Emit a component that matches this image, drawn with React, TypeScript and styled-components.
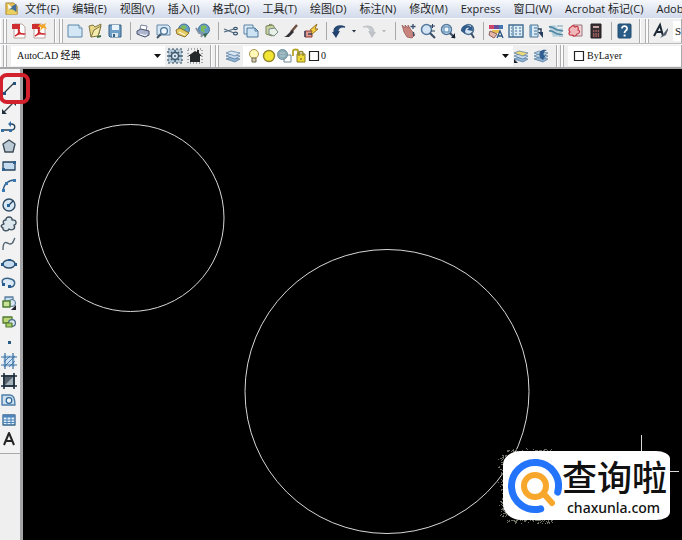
import React from "react";
import styled, { createGlobalStyle, css } from "styled-components";

const GlobalStyle = createGlobalStyle`
  * { box-sizing: border-box; }
  html, body { margin: 0; padding: 0; background: #000; }
  body { font-family: "Open Sans", "Noto Sans CJK SC", sans-serif; overflow: hidden; }
  button, select, input { font: inherit; color: inherit; margin: 0; padding: 0; border: 0; background: none; border-radius: 0; }
`;

const Page = styled.div`
  display: flex;
  flex-direction: column;
  min-height: 100vh;
  overflow: hidden;
`;

const MenuBar = styled.nav`
  display: flex;
  align-items: center;
  gap: 13px;
  height: 18px;
  padding-left: 5px;
  overflow: hidden;
  background: linear-gradient(#f6f8fc, #dfe5f1 60%, #d3dbec);
  color: #1c1d22;
  font-size: 11px;
  line-height: 16px;
`;

const AppMark = styled.svg`
  flex: none;
  width: 14px;
  height: 14px;
  margin-right: -7px;
`;

const MenuButton = styled.button`
  flex: none;
  white-space: nowrap;
  line-height: 16px;
`;

const ToolbarRow = styled.div<{ $last?: boolean }>`
  display: flex;
  align-items: stretch;
  height: ${(p) => (p.$last ? 25 : 26)}px;
  overflow: hidden;
  background: #efefef;
  border-top: 1px solid #fafafa;
  border-bottom: ${(p) => (p.$last ? "2px solid #a6a6a8" : "1px solid #b9b9bb")};
`;

const Toolbar = styled.div<{ $grow?: boolean }>`
  display: flex;
  flex: ${(p) => (p.$grow ? "1 1 0" : "none")};
  min-width: 0;
  align-items: center;
  padding: 0 7px 0 5px;
  border-left: 1px solid #fff;
  border-right: 1px solid #a9a9ab;
`;

const Grip = styled.span`
  flex: none;
  align-self: stretch;
  width: 4px;
  margin-right: 4px;
  border: solid #b0b0b2;
  border-width: 0 1px;
  background: #fbfbfb;
`;

const Group = styled.div<{ $gap?: number }>`
  display: flex;
  flex: none;
  align-items: center;
  gap: ${(p) => p.$gap ?? 4}px;
`;

const Divider = styled.span`
  flex: none;
  width: 12px;
  height: 18px;
  background: linear-gradient(#a9a9ab, #a9a9ab) 7px 0 / 1px 100% no-repeat;
`;

const IconButton = styled.button<{ $small?: boolean }>`
  display: flex;
  flex: none;
  align-items: center;
  justify-content: center;
  width: ${(p) => (p.$small ? 8 : 16)}px;
  height: 20px;
`;

const Glyph = styled.svg`
  display: block;
  flex: none;
  width: 16px;
  height: 16px;
  overflow: visible;
`;

const boxText = css`
  font-family: "Liberation Serif", "Noto Sans CJK SC", serif;
  font-size: 11px;
  line-height: 14px;
  color: #111;
`;

const Combo = styled.div<{ $width?: number }>`
  ${boxText}
  display: flex;
  flex: ${(p) => (p.$width ? "none" : "1 1 0")};
  width: ${(p) => (p.$width ? p.$width + "px" : "auto")};
  min-width: 0;
  align-items: center;
  height: 20px;
  padding-left: 3px;
  background: #fff;
`;

const ComboSelect = styled.select<{ $inset?: number }>`
  flex: 1 1 0;
  min-width: 0;
  height: 18px;
  padding: 0 14px 0 ${(p) => p.$inset ?? 0}px;
  appearance: none;
  font-size: 10px;
`;

const Arrow = styled.svg`
  flex: none;
  width: 7px;
  height: 4px;
  margin-right: 4px;
`;

const StyleInput = styled.input`
  ${boxText}
  flex: 1 1 0;
  min-width: 0;
  height: 20px;
  padding-left: 2px;
  margin-left: 4px;
  background: #fff;
`;

const Workspace = styled.main`
  display: flex;
  flex: 1;
  min-height: 0;
`;

const SideBar = styled.aside`
  flex: none;
  width: 23px;
  background: #efefef;
  border-right: 3px solid #a4a4a7;
`;

const DrawTools = styled.div`
  display: flex;
  flex-direction: column;
  width: 20px;
  height: 385px;
  padding: 9px 3px 4px 1px;
  background: #f2f2f2;
  border-bottom: 1px solid #a9a9ab;
`;

const DrawButton = styled.button`
  position: relative;
  display: flex;
  flex: 1;
  align-items: center;
  justify-content: center;
`;

const Highlight = styled.span`
  position: absolute;
  top: -5px;
  left: -2px;
  z-index: 2;
  width: 31px;
  height: 31px;
  border: 4px solid #d2202c;
  border-radius: 8px;
`;

const Canvas = styled.section`
  position: relative;
  flex: 1;
  min-width: 0;
  overflow: hidden;
  background: #000;
`;

const Drawing = styled.svg`
  display: block;
  width: 100%;
  height: 100%;
`;

const Badge = styled.div`
  position: absolute;
  right: 12px;
  bottom: 20px;
  display: flex;
  align-items: center;
  width: 167px;
  height: 69px;
  padding-left: 3px;
  background: #fff;
  border-radius: 18px 14px 14px 18px / 14px 8px 8px 16px;
  color: #111;
`;

const BadgeLogo = styled.svg`
  flex: none;
  width: 56px;
  height: 58px;
`;

const BadgeWords = styled.div`
  display: flex;
  flex-direction: column;
`;

const BadgeName = styled.strong`
  font: 500 35px/43px "Noto Sans CJK SC", sans-serif;
  white-space: nowrap;
`;

const BadgeSite = styled.a`
  padding: 1px 0 0 5px;
  color: inherit;
  font: 500 14px/20px "Noto Sans", sans-serif;
  text-decoration: none;
`;

const N = "#24435f";
const B = "#4d83b8";
const L = "#c5dcf0";

const line = (d: string, stroke = N, width = 1.2, fill = "none") => (
  <path d={d} stroke={stroke} strokeWidth={width} fill={fill} strokeLinejoin="round" />
);

const lens = (
  <>
    <circle cx="6.5" cy="6.5" r="5" fill="#d3e5f4" stroke="#53799e" strokeWidth="1.5" />
    <path d="M10 10l5 5" stroke="#3d5068" strokeWidth="2.2" />
  </>
);
const pdf = (
  <>
    <path d="M3 1h8l3 3v11H3z" fill="#fff" stroke="#b9a4a4" />
    <path d="M1 1h8v5H1z" fill="#cf2e31" />
    <path d="M4 13c3-1 5-5 4-7-2 1 1 6 5 5-3-1-6 0-9 2z" fill="none" stroke="#d0292d" strokeWidth="1.4" />
  </>
);
const printer = (
  <>
    <path d="M5 6L6 2l6 1-1 5" fill="#fff" stroke="#76829c" />
    <path d="M2 8l4-2 8 2v4l-4 2-8-3z" fill="#aeb6ce" stroke="#46516f" />
    <path d="M5 11l5 1.5 2-1" stroke="#fff" fill="none" />
  </>
);
const globe = (
  <>
    <circle cx="9" cy="6.5" r="5.5" fill="#659ec6" stroke="#44719a" />
    <path d="M6 3l4-1 2 3-3 1 1 4-4-2z" fill="#7dbb5b" />
  </>
);
const sheets = (top: string) => (
  <>
    <path d="M1 11l5-2 9 2-5 3z" fill="#8fb2d2" stroke="#4f789d" strokeWidth=".7" />
    <path d="M1 8l5-2 9 2-5 3z" fill="#c6daeb" stroke="#4f789d" strokeWidth=".7" />
    <path d="M1 5l5-2 9 2-5 3z" fill={top} stroke="#4f789d" strokeWidth=".7" />
  </>
);
const cloud = "M5 4c-1-4 7-4 6 0 5-1 5 5 2 5 2 4-2 6-5 4-1 3-7 2-6-1-4-2 0-4 1-4-2-3 0-4 2-4z";
const hatch = (
  <path d="M4 0v16M12 0v16M0 4h16M0 12h16" stroke="#3d6f9f" strokeWidth="1.2" />
);

const icons: Record<string, React.ReactNode> = {
  pdf,
  pdfNew: (
    <>
      {pdf}
      <path d="M7 4l2-3 2 1 4-2-1 3 2 3-4-1-3 3 1-4z" fill="#f1a72b" />
    </>
  ),
  new: (
    <>
      <path d="M1 2h11l3 3v9H1z" fill="#d3e7f5" stroke="#5d87ab" />
      <path d="M12 2v3h3" fill="#fff" stroke="#5d87ab" />
    </>
  ),
  open: (
    <>
      <path d="M2 3l4-1 2 2 6-3-2 10-8 3z" fill="#e7d788" stroke="#837640" />
      <path d="M4 14l3-7 7-4-3 10z" fill="#f5ecb0" stroke="#837640" />
      <path d="M10 14l4-1" stroke="#416c46" strokeWidth="2" />
    </>
  ),
  save: (
    <>
      <path d="M2 2h12v12H3l-1-1z" fill="#6f9fc6" stroke="#375f85" />
      <path d="M5 2h7v5H5z" fill="#eaf3fa" />
      <path d="M5 10h6v4H5z" fill="#dbe7ef" />
      <path d="M6 11h2v3H6z" fill="#375f85" />
    </>
  ),
  printer,
  preview: (
    <>
      <path d="M2 2h11l2 2v8H2z" fill="#d6e8f5" stroke="#6287a8" />
      <circle cx="9" cy="8" r="3.4" fill="#eef7fc" stroke="#4d7395" strokeWidth="1.3" />
      <path d="M6 11l-4 4" stroke="#44546b" strokeWidth="2" />
    </>
  ),
  publish: (
    <>
      {globe}
      <path d="M1 7l4-2 9 5-4 4-8-3z" fill="#e7cc62" stroke="#8b7230" />
      <path d="M4 9l6 3" stroke="#fff" />
    </>
  ),
  web: (
    <>
      {globe}
      <path d="M1 5l3 5 4 1-2 3" fill="none" stroke="#8693a4" strokeWidth="2" />
      <path d="M8 11l5-1-3 5z" fill="#376a4d" />
    </>
  ),
  cut: (
    <>
      <path d="M1 6l10 4M1 9l10-3" stroke="#526b80" strokeWidth="1.3" />
      <ellipse cx="12.5" cy="10.5" rx="2" ry="1.4" fill="none" stroke="#38556e" strokeWidth="1.2" />
      <ellipse cx="12.5" cy="5.5" rx="1.8" ry="1.2" fill="none" stroke="#38556e" strokeWidth="1.2" />
    </>
  ),
  copy: (
    <>
      <path d="M1 2h9v9H1z" fill="#dcebf6" stroke="#5882a6" />
      <path d="M4 5h8l3 3v6H4z" fill="#cde2f2" stroke="#4c789f" />
      <path d="M12 5v3h3" fill="none" stroke="#4c789f" />
    </>
  ),
  paste: (
    <>
      <path d="M3 3l7-1 4 7-5 4-6-2z" fill="#cbd2a2" stroke="#7a855c" />
      <path d="M6 6l6-1 3 4-4 4-5-2z" fill="#e9f0e8" stroke="#718a84" />
      <path d="M5 3l2-2 2 1" fill="none" stroke="#7a855c" />
    </>
  ),
  brush: (
    <>
      <path d="M14 2L8 9" stroke="#6a4e3e" strokeWidth="2.4" />
      <path d="M9 7L3 13l-2 1 5 0 5-5z" fill="#353237" />
    </>
  ),
  block: (
    <>
      <path d="M2 8h7v6H2z" fill="#e5998c" stroke="#8c3936" />
      <path d="M7 7l7-6-2 5 3 0-7 6 1-4z" fill="#f4cf42" stroke="#987323" />
      <path d="M2 8v6M5 11h4" stroke="#3b4663" strokeWidth="1.5" />
    </>
  ),
  undo: (
    <>
      <path d="M4 11C1 5 7 1 14 4 9 3 6 6 7 10" fill="#284e7c" stroke="#22426b" strokeWidth="1.3" />
      <path d="M1 9l8-1-4 7z" fill="#22426b" />
    </>
  ),
  redo: (
    <>
      <path d="M12 11c3-6-3-10-10-7 5-1 8 2 7 6" fill="#c6c9cd" stroke="#bec2c7" />
      <path d="M15 9L7 8l4 7z" fill="#bec2c7" />
    </>
  ),
  dot: <path d="M6 7h4L8 9.5z" fill="#222c3b" />,
  dotOff: <path d="M6 7h4L8 9.5z" fill="#b3b6bb" />,
  pan: (
    <>
      <path d="M2 2l3 3V2l3 3V2l3 5 1 1 3 4-3 3-5-1-3-5z" fill="#c8837d" stroke="#985c59" strokeWidth=".8" />
      <path d="M13 1v5M10.5 3.500h5M13.500 9v4" stroke="#39516e" strokeWidth="1.3" />
    </>
  ),
  zoom: (
    <>
      {lens}
      <path d="M10 3h5M12.5 1v4M11 8h4" stroke="#2b405a" />
    </>
  ),
  zoomWindow: (
    <>
      {lens}
      <path d="M4 4h5v5H4z" fill="#edf6fc" stroke="#4378a5" />
      <path d="M15 10v5h-4z" fill="#18212d" />
    </>
  ),
  zoomBack: (
    <>
      <circle cx="8.5" cy="6.5" r="5" fill="#d3e5f4" stroke="#4e7292" strokeWidth="1.5" />
      <path d="M11 10l3 5" stroke="#3d5068" strokeWidth="2" />
      <path d="M1 8c0-6 6-7 10-4l1-2 1 6-6-1 2-2C6 4 5 7 5 11z" fill="#315b8a" />
    </>
  ),
  props: (
    <>
      <path d="M1 2h5v4H1z" fill="#cf4569" />
      <path d="M6 2h5v4H6z" fill="#644f9c" />
      <path d="M11 2h4v4h-4z" fill="#4377b4" />
      <path d="M4 7h8v3H4z" fill="#e7bf4f" />
      <path d="M2 8l7 3-3 4-5-3z" fill="#e6b8a7" stroke="#885e5d" />
      <path d="M9 15l3-7 3 7M10 13h4" fill="none" stroke="#315880" strokeWidth="1.3" />
    </>
  ),
  center: (
    <>
      <path d="M1 2h14v12H1z" fill="#dcecf5" stroke="#426c91" strokeWidth="1.4" />
      <path d="M5 2v12M3 5h1M3 8h1M3 11h1M7 5h2M11 5h2M7 8h2M11 8h2M7 11h2M11 11h2" stroke="#396892" />
    </>
  ),
  palette: (
    <>
      <path d="M2 2h8v12H2z" fill="#d9e9f5" stroke="#4a7395" />
      <path d="M2 2h2v12H2z" fill="#6d9fc7" />
      <path d="M6 5h3M6 8h3M6 11h3" stroke="#456f93" />
      <path d="M10 6h3v4" stroke="#263f5d" strokeWidth="1.5" fill="none" />
      <path d="M10 9l5 6V9z" fill="#263f5d" />
    </>
  ),
  sheetset: (
    <>
      <path d="M1 3l6-1 3 4 5-1-2 8-8 1z" fill="#b5cfdd" />
      <path d="M1 4c5-1 5 3 9 3l5 1M1 8c5-1 5 3 9 3l5 1" stroke="#4e859e" fill="none" strokeWidth="1.6" />
      <path d="M9 3h6M11 13h4" stroke="#b2c6d1" strokeWidth="2" />
    </>
  ),
  markup: (
    <>
      <path d="M5 2h9v11H5z" fill="#eed4d6" stroke="#9c747c" />
      <path d="M3 4c2-3 4 0 4 0 3-2 4 1 3 3 3 1 1 4-1 4-1 3-4 2-5 1-3 1-4-2-2-3-2-2-1-4 1-5z" fill="#efb7b9" stroke="#c43a48" strokeWidth="1.2" />
    </>
  ),
  calc: (
    <>
      <path d="M3 1h10v14H3z" fill="#382f34" stroke="#211f23" />
      <path d="M5 3h6v2H5z" fill="#c9a5a0" />
      <path d="M5 8h6M5 11h6M5 13h6" stroke="#bf6d67" strokeDasharray="1.4 1" strokeWidth="1.3" />
    </>
  ),
  help: (
    <>
      <rect x="2" y="1" width="13" height="14" rx="1" fill="#295c86" stroke="#214d73" />
      <path d="M6 5.5C6 2 11.5 2.5 11 6c-.3 1.700-2.500 1.700-2.500 4" fill="none" stroke="#fff" strokeWidth="1.8" />
      <path d="M7.600 11.500h2v2h-2z" fill="#fff" />
    </>
  ),
  textStyle: (
    <>
      <path d="M1 13L7 2l3 11M4 9h5" fill="none" stroke="#1d2836" strokeWidth="2" />
      <path d="M15 5l-4 5-4 5 6-3 2-5z" fill="#566270" />
    </>
  ),
  gear: (
    <>
      <path d="M1 1h14v14H1z" fill="#b5c8d5" stroke="#334d62" strokeDasharray="2 2" strokeWidth="1.2" />
      <path d="M8 2v12M2 8h12M4 4l8 8M12 4l-8 8" stroke="#3d586d" strokeWidth="1.4" />
      <circle cx="8" cy="8" r="3.500" fill="#d7e4ed" stroke="#3d586d" strokeWidth="1.4" />
      <circle cx="8" cy="8" r="1" fill="#3d586d" />
    </>
  ),
  home: (
    <>
      <path d="M1 1h14v14H1z" fill="none" stroke="#8d9195" strokeDasharray="1 2" strokeWidth="1.5" />
      <path d="M1 8l7-5 2 1V2h2v3l3 3h-2v6H3V8z" fill="#25282b" />
    </>
  ),
  layers: sheets("#d9e7f2"),
  layerMake: (
    <>
      {sheets("#eedb78")}
      <path d="M1 11v4h4z" fill="#1f2937" />
    </>
  ),
  layerBack: (
    <>
      {sheets("#b7cee1")}
      <path d="M7 9C5 3 9 1 14 2c-3 1-4 3-3 6l2-1-3 5-5-4z" fill="#315f91" />
    </>
  ),
  bulb: (
    <>
      <circle cx="8" cy="6" r="4.500" fill="#fff8b8" stroke="#ad9344" />
      <path d="M6 10h4v4H6z" fill="#d7cfaf" stroke="#6d684e" />
    </>
  ),
  sun: <circle cx="8" cy="8" r="5.500" fill="#f3e534" stroke="#918827" strokeWidth="1.400" />,
  freeze: (
    <>
      <path d="M8 7h7v7H8z" fill="#fff" stroke="#6f8593" />
      <circle cx="6.500" cy="6.500" r="5" fill="#8eacb5" stroke="#6f929d" />
      <path d="M4 5h5M4 8h5" stroke="#b3cbd0" />
    </>
  ),
  lock: (
    <>
      <path d="M2 8V3c0-2 5-2 5 0v3" fill="none" stroke="#b3a329" strokeWidth="1.800" />
      <path d="M6 6h8v8H6z" fill="#efdb36" stroke="#8c7d24" />
      <path d="M8 8V5c0-2 4-2 4 0v3M9 11h2" fill="none" stroke="#92842d" strokeWidth="1.400" />
    </>
  ),
  square: <path d="M3.500 3.500h9v9h-9z" fill="#fff" stroke="#222" strokeWidth="1.2" />,
  line: (
    <>
      {line("M3 13L13 3", "#333d45", 1.3)}
      <path d="M2 12h3v3H2zM12 2h3v3h-3z" fill="#25537e" />
    </>
  ),
  xline: (
    <>
      {line("M2 14L14 2", "#333d45", 1.2)}
      <path d="M1 10v5h5zM10 2h5v5z" fill="#23313d" />
    </>
  ),
  pline: (
    <>
      {line("M1 11h9c5 0 5-6 0-6H9", N, 1.4)}
      <path d="M0 10h3v3H0zM8 10h3v3H8zM7 5l3-3v6z" fill="#356fa5" />
    </>
  ),
  polygon: line("M8 2l6 4-2 8H4L2 6z", "#3f4d59", 1.4, "#bdcbd7"),
  rect: (
    <>
      {line("M2 4h12v8H2z", N, 1.3, L)}
      <path d="M1 10h3v3H1zM12 3h3v3h-3z" fill="#2f6090" />
    </>
  ),
  arc: (
    <>
      {line("M2 14C3 7 7 3 14 3", "#315e88", 1.5)}
      <path d="M1 12h3v3H1zM4 5h3v3H4zM12 2h3v3h-3z" fill="#3c79b1" />
    </>
  ),
  circle: (
    <>
      <circle cx="8" cy="8" r="6" fill="#d7e7f3" stroke="#304e67" strokeWidth="1.4" />
      {line("M8 8l4-4", "#23425e", 1.3)}
      <path d="M6 7h3v3H6z" fill="#286398" />
    </>
  ),
  cloud: line(cloud, "#40515f", 1.4, "#dce6ed"),
  spline: line("M2 14C2 2 7 8 9 8c4 0 3-4 5-6", "#526675", 1.4),
  ellipse: (
    <>
      <ellipse cx="8" cy="8" rx="6" ry="4" fill={L} stroke="#2d4e6a" strokeWidth="1.400" />
      <path d="M0 7h3v3H0zM13 7h3v3h-3zM7 3h3v2H7z" fill="#24578a" />
    </>
  ),
  ellipseArc: (
    <>
      {line("M2 9C-1 4 5 2 10 4c6 2 4 9-2 8", "#39658c", 1.5, "#dce9f4")}
      <path d="M1 8h3v3H1zM7 10h3v3H7z" fill="#245b91" />
    </>
  ),
  insert: (
    <>
      {line("M4 2h8v8H4z", "#587e9e", 1.3, L)}
      <circle cx="11" cy="8" r="3.500" fill="#d9e7ee" stroke="#486f91" />
      {line("M2 6h7v6H2z", "#4d7b31", 1.5, "#c9e29a")}
      <path d="M15 10v5h-5z" fill="#20242a" />
    </>
  ),
  makeBlock: (
    <>
      {line("M2 3h9v6H2z", "#527833", 1.3, "#bed775")}
      <circle cx="11" cy="9" r="3.400" fill="#dce9f4" stroke="#496a87" strokeWidth="1.3" />
      {line("M5 9h6v4H5z", "#537b34", 1.2, "#a9ce63")}
    </>
  ),
  point: <path d="M7 7h3v3H7z" fill="#295b87" />,
  hatch: (
    <>
      <path d="M2 2h12v12H2z" fill="#cee2f2" />
      <path d="M3 14L14 3M3 9l6-6M8 14l6-6" stroke={B} />
      {hatch}
    </>
  ),
  gradient: (
    <>
      <path d="M2 2h12v12H2z" fill="#56616b" />
      <path d="M4 12L12 4v8z" fill="#a5b1ba" />
      <path d="M3 0v16M13 0v16M0 3h16M0 13h16" stroke="#1d2d3b" strokeWidth="1.600" />
    </>
  ),
  region: (
    <>
      {line("M1 3h8c3 0 5 4 5 10H1z", "#4d7da8", 1.4, "#cce0f0")}
      <circle cx="8" cy="8.500" r="2.800" fill="#f2f7fb" stroke="#336998" strokeWidth="1.300" />
    </>
  ),
  table: (
    <>
      {line("M2 3h12v10H2z", "#39658f", 1.3, "#e0effa")}
      <path d="M2 3h12v2.500H2z" fill={B} />
      {line("M2 8h12M2 10.500h12M6 4v9M10 4v9", B, 1)}
    </>
  ),
  mtext: line("M3 14L8 2l5 12M5 10h6", "#252525", 2),
};

const Icon = ({ name }: { name: string }) => (
  <Glyph viewBox="0 0 16 16" aria-hidden="true">
    {icons[name]}
  </Glyph>
);

const Tools = ({ names, gap }: { names: string[]; gap?: number }) => (
  <Group $gap={gap}>
    {names.map((n, i) => (
      <IconButton key={n + i} aria-label={n} $small={n.startsWith("dot")}>
        <Icon name={n} />
      </IconButton>
    ))}
  </Group>
);

const DropArrow = () => (
  <Arrow viewBox="0 0 7 4" aria-hidden="true">
    <path d="M0 0h7L3.500 4z" fill="#111" />
  </Arrow>
);

const menus = [
  "文件(F)", "编辑(E)", "视图(V)", "插入(I)", "格式(O)", "工具(T)", "绘图(D)",
  "标注(N)", "修改(M)", "Express", "窗口(W)", "Acrobat 标记(C)", "Adobe",
];

const standardGroups: { names: string[]; gap?: number }[] = [
  { names: ["new", "open", "save"] },
  { names: ["printer", "preview", "publish", "web"] },
  { names: ["cut", "copy", "paste", "brush", "block"] },
  { names: ["undo", "dot", "redo", "dotOff"], gap: 3 },
  { names: ["pan", "zoom", "zoomWindow", "zoomBack"] },
  { names: ["props", "center", "palette", "sheetset", "markup", "calc"] },
  { names: ["help"] },
];

const drawTools = [
  "line", "xline", "pline", "polygon", "rect", "arc", "circle", "cloud", "spline", "ellipse",
  "ellipseArc", "insert", "makeBlock", "point", "hatch", "gradient", "region", "table", "mtext",
];

// Grain scattered along the left, top-left and bottom-left edges of the badge.
const grain = (() => {
  let seed = 7;
  const rand = () => {
    seed = (seed * 16807) % 2147483647;
    return seed / 2147483647;
  };
  let d = "";
  for (let i = 0; i < 330; i++) {
    const out = Math.floor(rand() * rand() * 8);
    const side = rand();
    const x = side < 0.6 ? 480 + Math.floor(rand() * 4) - out : 484 + Math.floor(rand() * 46);
    const y =
      side < 0.6
        ? 386 + Math.floor(rand() * 62)
        : side < 0.8
          ? 382 - Math.floor(out / 2)
          : 451 + Math.floor(out / 2);
    d += `M${x} ${y}h1v1h-1z`;
  }
  return d;
})();

const PdfBar = styled(Toolbar)`
  width: 55px;
  padding: 0 0 0 2px;
`;
const StandardBar = styled(Toolbar)`
  padding-left: 3px;
`;
const StyleBar = styled(Toolbar)`
  padding: 0 0 0 4px;
`;
const WorkspaceBar = styled(Toolbar)`
  width: 211px;
  padding: 0 0 0 2px;
`;
const LayerBar = styled(Toolbar)`
  width: 346px;
  padding: 0 0 0 3px;
`;
const PropertyBar = styled(Toolbar)`
  padding: 0 0 0 2px;
`;
const AfterCombo = styled.div`
  flex: none;
  padding-left: 2px;
`;
const StateIcons = styled.div`
  display: grid;
  flex: none;
  grid-template-columns: repeat(5, 15px);
  justify-items: center;
`;

export default function App() {
  return (
    <>
      <GlobalStyle />
      <Page>
        <MenuBar>
          <AppMark viewBox="0 0 16 16" aria-hidden="true">
            <path d="M1 1h9l4 4v9H1z" fill="#e3bf53" stroke="#ab8a3b" />
            <path d="M4 7l9-5v9H6z" fill="#426d9a" />
            <path d="M2 12c3-6 9-4 12 2H3z" fill="#ead05d" />
            <path d="M3 2l5 4-4 3" fill="#f9f7e5" />
          </AppMark>
          {menus.map((m) => (
            <MenuButton key={m}>{m}</MenuButton>
          ))}
        </MenuBar>
        <ToolbarRow>
          <PdfBar>
            <Grip />
            <Tools names={["pdf", "pdfNew"]} />
          </PdfBar>
          <StandardBar>
            <Grip />
            {standardGroups.map((g, i) => (
              <React.Fragment key={i}>
                {i > 0 && <Divider />}
                <Tools names={g.names} gap={g.gap} />
              </React.Fragment>
            ))}
          </StandardBar>
          <StyleBar $grow>
            <Grip />
            <Tools names={["textStyle"]} />
            <StyleInput aria-label="Text style" defaultValue="Standard" />
          </StyleBar>
        </ToolbarRow>
        <ToolbarRow $last>
          <WorkspaceBar>
            <Grip />
            <Combo $width={154}>
              <ComboSelect aria-label="Workspace" $inset={3}>
                <option>AutoCAD 经典</option>
              </ComboSelect>
              <DropArrow />
            </Combo>
            <AfterCombo>
              <Tools names={["gear", "home"]} />
            </AfterCombo>
          </WorkspaceBar>
          <LayerBar>
            <Grip />
            <AfterCombo>
              <Tools names={["layers"]} />
            </AfterCombo>
            <AfterCombo>
              <Combo $width={270}>
                <StateIcons>
                  {["bulb", "sun", "freeze", "lock", "square"].map((n) => (
                    <Icon key={n} name={n} />
                  ))}
                </StateIcons>
                <ComboSelect aria-label="Layer">
                  <option>0</option>
                </ComboSelect>
                <DropArrow />
              </Combo>
            </AfterCombo>
            <Tools names={["layerMake", "layerBack"]} />
          </LayerBar>
          <PropertyBar $grow>
            <Grip />
            <Combo>
              <Icon name="square" />
              <ComboSelect aria-label="Color">
                <option>ByLayer</option>
              </ComboSelect>
            </Combo>
          </PropertyBar>
        </ToolbarRow>
        <Workspace>
          <SideBar>
            <DrawTools>
              {drawTools.map((n) => (
                <DrawButton key={n} aria-label={n}>
                  <Icon name={n} />
                  {n === "line" && <Highlight />}
                </DrawButton>
              ))}
            </DrawTools>
          </SideBar>
          <Canvas>
            <Drawing role="img" aria-label="Two circles">
              <g fill="none" stroke="#d8d8d8" strokeWidth="1">
                <circle cx="107.500" cy="149" r="93.500" />
                <circle cx="364" cy="322.500" r="142" />
                <path d="M618.500 366v74M582 402.500h74" />
              </g>
              <path d={grain} fill="#6d6d62" />
            </Drawing>
            <Badge>
              <BadgeLogo viewBox="0 0 56 58" aria-hidden="true">
                <path d="M51.700 35.100A23.500 23.500 0 1 0 34.700 51.800" fill="none" stroke="#2474fb" strokeWidth="7" strokeLinecap="round" />
                <circle cx="29" cy="29" r="11" fill="none" stroke="#f8a72d" strokeWidth="6" />
                <path d="M38 37l8 9" stroke="#f8a72d" strokeWidth="6" strokeLinecap="round" />
              </BadgeLogo>
              <BadgeWords>
                <BadgeName>查询啦</BadgeName>
                <BadgeSite href="#chaxunla">chaxunla.com</BadgeSite>
              </BadgeWords>
            </Badge>
          </Canvas>
        </Workspace>
      </Page>
    </>
  );
}
